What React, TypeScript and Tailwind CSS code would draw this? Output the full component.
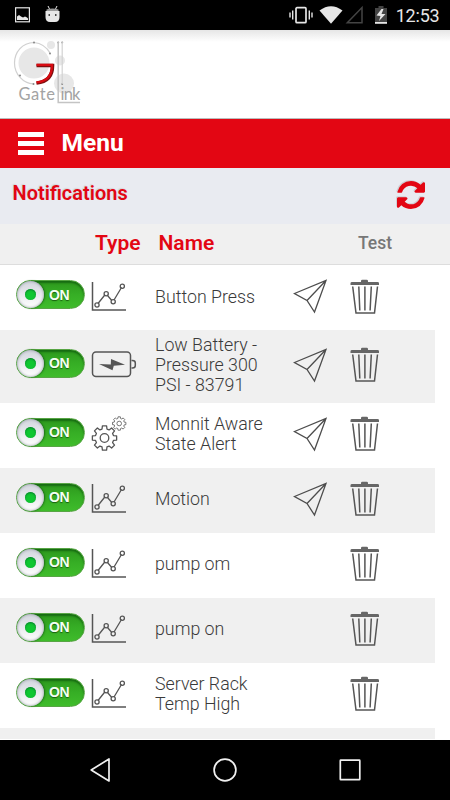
import type { ReactNode } from "react";

type IconKind = "chart" | "battery" | "gears";

type Notification = {
  name: string;
  icon: IconKind;
  canSend: boolean;
};

const notifications: Notification[] = [
  { name: "Button Press", icon: "chart", canSend: true },
  { name: "Low Battery - Pressure 300 PSI - 83791", icon: "battery", canSend: true },
  { name: "Monnit Aware State Alert", icon: "gears", canSend: true },
  { name: "Motion", icon: "chart", canSend: true },
  { name: "pump om", icon: "chart", canSend: false },
  { name: "pump on", icon: "chart", canSend: false },
  { name: "Server Rack Temp High", icon: "chart", canSend: false },
];

function StatusBar() {
  return (
    <header className="flex h-[30px] shrink-0 items-center bg-black text-[#e6e6e6]">
      <svg className="ml-[15px]" width="15" height="16" viewBox="0 0 15 16">
        <rect x="0.6" y="0.8" width="13.8" height="14" fill="none" stroke="currentColor" strokeWidth="1.2" />
        <path d="M2 13V9.500l2-1.500 2 1.500 2 1 2-1 2 1 1 1V13z" fill="currentColor" />
      </svg>
      <svg className="ml-[15px]" width="15" height="18" viewBox="0 0 15 18">
        <path d="M3 0l1.500 3M12 0l-1.500 3" stroke="currentColor" strokeWidth="1" />
        <path d="M1.500 3.500Q7.500 1.500 13.500 3.500V7H1.500z" fill="#999" />
        <path d="M.5 5h14v6q0 5-4.500 5H5Q.5 16 .5 11z" fill="currentColor" />
        <path d="M3.500 9h1.500M10 9h1.500" stroke="#111" strokeWidth="1.500" />
      </svg>
      <svg className="ml-auto" width="24" height="20" viewBox="0 0 24 20">
        <path d="M1 7.500v5M3.700 5.500v9M20.300 5.500v9M23 7.500v5" stroke="currentColor" strokeWidth="1.400" />
        <rect x="7" y="2.700" width="10" height="15" rx="1" fill="none" stroke="currentColor" strokeWidth="1.700" />
      </svg>
      <svg className="ml-[6px]" width="24" height="20" viewBox="0 0 24 20">
        <path d="M.5 5.500Q12 -3 23.500 5.500L12 18.800z" fill="currentColor" />
      </svg>
      <svg className="ml-[2px]" width="20" height="20" viewBox="0 0 20 20">
        <path d="M2.300 17.800H17V2.500z" fill="none" stroke="#444" strokeWidth="1.500" />
      </svg>
      <svg className="ml-[9px]" width="14" height="20" viewBox="0 0 14 20">
        <path d="M1 3h3.500V1h5v2H13v14H1z" fill="#444" />
        <path d="M1 17h12v1.800H1z" fill="currentColor" />
        <path d="M7.500 4L2.500 10.500l4 .5-1.500 5 6.500-7H7.500L9.500 4z" fill="currentColor" />
      </svg>
      <span className="mr-[10.5px] ml-[8px] pt-px text-[18px] leading-none tracking-[-0.2px]">12:53</span>
    </header>
  );
}

function Logo() {
  return (
    <svg width="72" height="70" viewBox="0 0 72 70">
      <g fill="#e7e7e7">
        <circle cx="21" cy="28" r="15.500" />
        <circle cx="38" cy="10" r="4" />
        <circle cx="47" cy="25.500" r="5" />
        <circle cx="51" cy="48.500" r="10" />
      </g>
      <path
        d="M37 18A21 21 0 0 0 21 7.500C9 8 1.500 17 1.500 28S10 48.500 20.500 49"
        fill="none"
        stroke="#d0d0d0"
        strokeWidth="1.200"
      />
      <g fill="#888">
        <circle cx="21" cy="7.500" r="1" />
        <circle cx="37" cy="18.500" r="1" />
        <circle cx="7" cy="40.500" r="1" />
        <circle cx="20.500" cy="49" r="1" />
        <circle cx="45.200" cy="7.500" r="1" />
        <circle cx="49.200" cy="7.500" r="1" />
        <circle cx="49.200" cy="49" r="1" />
      </g>
      <path d="M45.200 7v60.500H67" fill="none" stroke="#c4c4c4" strokeWidth="1.500" />
      <path d="M49.200 7v42" stroke="#d2d2d2" strokeWidth="1.200" />
      <path d="M23.500 30.500h16C39.500 41 34 47 23.500 48" fill="none" stroke="#7e1010" strokeWidth="3.600" />
      <path d="M23.500 29.900h15.500C39 40 34 46.500 23.500 47.300" fill="none" stroke="#d80b12" strokeWidth="2.200" />
      <g fill="#a3a3a3" fontFamily="Lato, sans-serif" fontSize="16.500">
        <text x="5.500" y="65" textLength="36.500">Gate</text>
        <text x="47.500" y="65" textLength="20">ink</text>
      </g>
    </svg>
  );
}

function RefreshIcon() {
  return (
    <svg className="drop-shadow-[-1px_-1px_0_#cfcfd4]" width="28" height="28" viewBox="0 0 1536 1536" fill="#e30613">
      <path d="M1511 928q0 5-1 7-64 268-268 434.500T764 1536q-146 0-282.500-55T238 1324l-129 129q-19 19-45 19t-45-19-19-45V960q0-26 19-45t45-19h448q26 0 45 19t19 45-19 45l-137 137q71 66 161 102t187 36q134 0 250-65t186-179q11-17 53-117 8-23 30-23h192q13 0 22.500 9.500t9.500 22.500zm25-800v448q0 26-19 45t-45 19h-448q-26 0-45-19t-19-45 19-45l138-138Q969 256 768 256q-134 0-250 65T332 500q-11 17-53 117-8 23-30 23H50q-13 0-22.500-9.500T18 608v-7q65-268 270-434.500T768 0q146 0 284 55.500T1297 212l130-129q19-19 45-19t45 19 19 45z" />
    </svg>
  );
}

function Toggle() {
  return (
    <button
      type="button"
      className="flex h-[29px] w-[69px] shrink-0 items-center rounded-full border border-[#57a544] bg-linear-to-b from-[#2d981d] via-[#36ae25] to-[#3fbc2b] shadow-[inset_0_2px_2px_#176b12]"
    >
      <span className="flex size-[27px] items-center justify-center rounded-full bg-linear-to-b from-[#d2d5dd] to-[#ffffff] shadow-[1px_0_2px_#1c6c17,inset_0_0_3px_#8b8f9c]">
        <span className="size-[11px] rounded-full bg-[#10c732] shadow-[inset_0_1px_2px_#087f2d]" />
      </span>
      <span className="ml-[5px] font-['Liberation_Sans'] text-[14px] leading-none font-bold tracking-[-0.3px] text-[#f4fff3] [text-shadow:0_1px_1px_#18600f]">
        ON
      </span>
    </button>
  );
}

function ChartIcon() {
  return (
    <svg width="36" height="32" viewBox="0 0 36 32" fill="none" stroke="#555">
      <path d="M1.500 1V29H35" strokeWidth="1.500" />
      <path d="M7 22.500l6.800-8.500M16.300 14.300l4.500 5.200M23 19l7.500-12.500" strokeWidth="1.300" />
      <g strokeWidth="1.300">
        <circle cx="6" cy="24" r="2.100" />
        <circle cx="15.200" cy="12.800" r="2.100" />
        <circle cx="22.200" cy="20.800" r="2.100" />
        <circle cx="31.300" cy="5.300" r="2.100" />
      </g>
    </svg>
  );
}

function BatteryIcon() {
  return (
    <svg width="46" height="28" viewBox="0 0 46 28" fill="none" stroke="#555" strokeWidth="1.500">
      <rect x="1.500" y="1" width="38" height="24.500" rx="3.500" />
      <path d="M40.500 9.500h1q2.800 0 2.800 2.500v2.500q0 2.500-2.800 2.500h-1" />
      <path d="M8 13L19.800 13.600 20 8 34 13.800 22.800 14.800 21.500 19.300z" fill="#555" stroke="none" />
    </svg>
  );
}

// Outline of an eight-toothed cog centred on the origin.
function cogPoints(inner: number, outer: number) {
  const points: string[] = [];
  for (let tooth = 0; tooth < 8; tooth++) {
    const steps: [number, number][] = [[-0.27, inner], [-0.17, outer], [0.17, outer], [0.27, inner]];
    steps.forEach(([offset, radius]) => {
      const angle = (tooth * Math.PI) / 4 + offset;
      points.push(`${(Math.cos(angle) * radius).toFixed(2)},${(Math.sin(angle) * radius).toFixed(2)}`);
    });
  }
  return points.join(" ");
}

function GearsIcon() {
  return (
    <svg width="36" height="36" viewBox="0 0 36 36" fill="none" stroke="#555" strokeLinejoin="round">
      <g transform="translate(13.500 22)" strokeWidth="1.300">
        <polygon points={cogPoints(9.3, 12.3)} />
        <circle r="4.300" />
      </g>
      <g transform="translate(28.200 7.500)" strokeWidth="0.800">
        <polygon points={cogPoints(5.2, 6.8)} />
        <circle r="2.300" />
      </g>
    </svg>
  );
}

function PlaneIcon() {
  return (
    <svg width="35" height="35" viewBox="0 0 35 35" fill="none" stroke="#4d4d4d" strokeWidth="1.300">
      <path d="M1.500 14.500L33 1.500 21.500 33 14 21.500zM14 21.500L33 1.500" />
    </svg>
  );
}

function TrashIcon() {
  return (
    <svg className="mb-[2px]" width="30" height="36" viewBox="0 0 30 36" fill="none" stroke="#555">
      <path
        d="M11 3V2q0-1.300 1.300-1.300h4.400Q18 .7 18 2v1h9.500q1.500 0 1.500 1.300V6H.5V4.300Q.5 3 2 3z"
        fill="#666"
        stroke="none"
      />
      <path d="M2.700 7.500L6 34h18.500L27.500 7.500" strokeWidth="1.500" />
      <path d="M8.800 7.500l1 24M14.900 7.500v24M21.300 7.500l-1.200 24" strokeWidth="1.500" />
    </svg>
  );
}

const typeIcons: Record<IconKind, ReactNode> = {
  chart: <ChartIcon />,
  battery: <BatteryIcon />,
  gears: <GearsIcon />,
};

function NotificationRow({ name, icon, canSend }: Notification) {
  return (
    <li className="flex min-h-[65px] w-[435px] shrink-0 items-center py-[5.25px] even:bg-[#f0f0f0]">
      <div className="mb-[6px] ml-[16px]">
        <Toggle />
      </div>
      <div className="mb-[2px] ml-[6px] w-[64px]">{typeIcons[icon]}</div>
      <p className="mb-[2px] w-[118px] text-[17.8px] leading-[20px] font-light text-[#3a3a3a]">{name}</p>
      <div className="mb-[2px] ml-[20px] w-[57px]">{canSend && <PlaneIcon />}</div>
      <TrashIcon />
    </li>
  );
}

function NavigationBar() {
  return (
    <footer className="flex h-[60px] shrink-0 items-center justify-center gap-[101px] bg-black">
      <svg width="24" height="26" viewBox="0 0 24 26" fill="none" stroke="#f0f0f0" strokeWidth="1.700" strokeLinejoin="round">
        <path d="M3.200 13L21 2v22z" />
      </svg>
      <svg width="24" height="26" viewBox="0 0 24 26" fill="none" stroke="#f0f0f0" strokeWidth="1.700">
        <circle cx="12" cy="13" r="10.900" />
      </svg>
      <svg width="24" height="26" viewBox="0 0 24 26" fill="none" stroke="#f0f0f0" strokeWidth="1.700">
        <rect x="2.300" y="3.200" width="19.500" height="19.500" rx="0.500" />
      </svg>
    </footer>
  );
}

export default function App() {
  return (
    <div className="flex h-[800px] w-[450px] flex-col overflow-hidden bg-white font-[Roboto,sans-serif]">
      <StatusBar />
      <div className="h-[89px] shrink-0 border-b border-[#bbb] bg-linear-to-b from-[#e6e6e6] to-white to-[12px] pt-[5px] pl-[13px]">
        <Logo />
      </div>
      <div className="flex h-[49px] shrink-0 items-center bg-[#e30613] text-white">
        <div className="ml-[18px] flex w-[26px] flex-col gap-[4px]">
          <span className="h-[5px] bg-white" />
          <span className="h-[5px] bg-white" />
          <span className="h-[5px] bg-white" />
        </div>
        <span className="ml-[17.5px] text-[24.5px] leading-none font-bold">Menu</span>
      </div>
      <div className="flex h-[56px] shrink-0 justify-between bg-[#e9ebf1] pr-[25px] pl-[12.5px]">
        <h1 className="pt-[13px] text-[20px] leading-[24px] font-semibold text-[#e30613] [text-shadow:-1px_-1px_1px_#d5d5da]">
          Notifications
        </h1>
        <div className="pt-[13px]">
          <RefreshIcon />
        </div>
      </div>
      <div className="flex h-[41px] shrink-0 items-center border-b border-[#ddd] bg-[#f0f0f0] pb-px text-[21px] font-semibold text-[#e30613]">
        <span className="ml-[95px] w-[63.5px]">Type</span>
        <span className="w-[199.5px]">Name</span>
        <span className="text-[17.5px] font-medium text-[#777]">Test</span>
      </div>
      <ul className="flex min-h-0 flex-1 flex-col overflow-hidden border-b border-white">
        {notifications.map((item) => (
          <NotificationRow key={item.name} {...item} />
        ))}
        <li className="h-[14px] w-[435px] shrink-0 bg-[#f0f0f0]" />
      </ul>
      <NavigationBar />
    </div>
  );
}
